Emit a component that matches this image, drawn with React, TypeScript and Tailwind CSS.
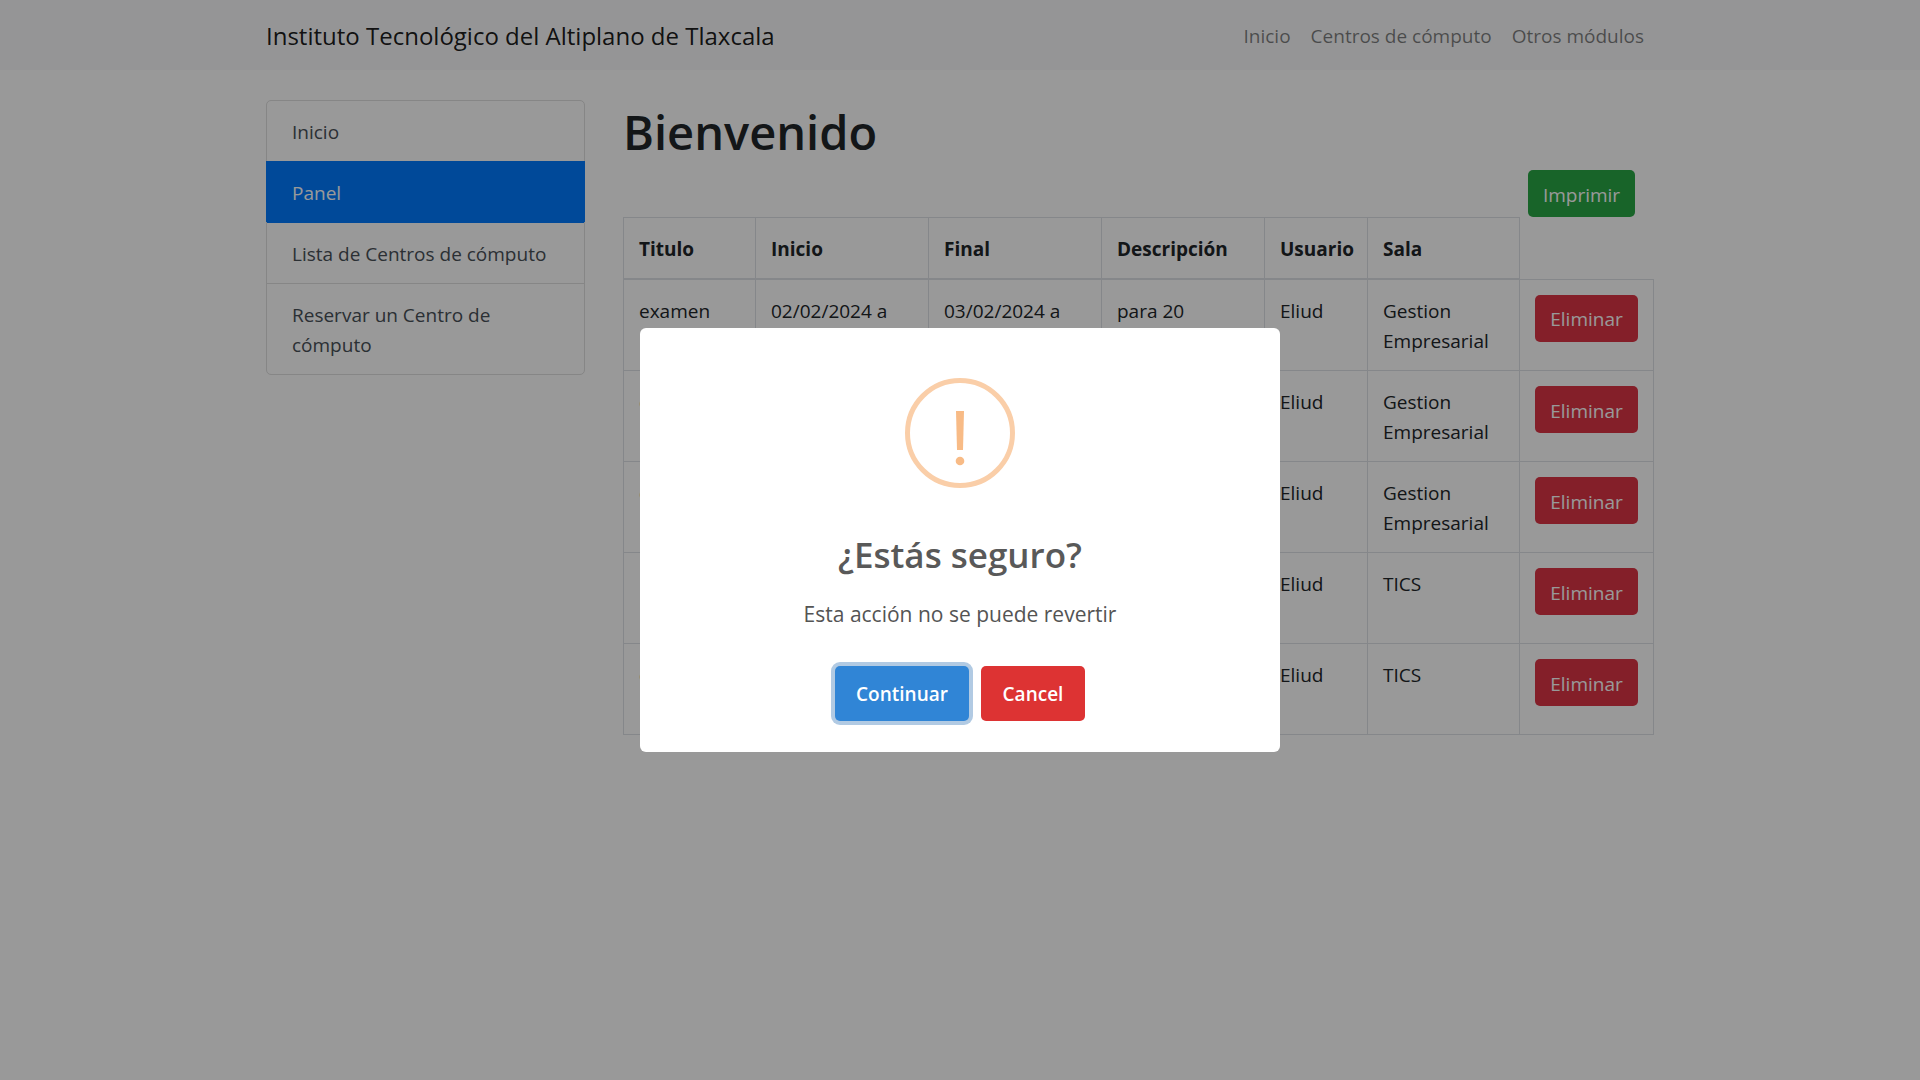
const navLinks = ['Inicio', 'Centros de cómputo', 'Otros módulos'];

const menu = [
  { label: 'Inicio', active: false },
  { label: 'Panel', active: true },
  { label: 'Lista de Centros de cómputo', active: false },
  { label: 'Reservar un Centro de cómputo', active: false },
];

const columns = [
  { label: 'Titulo', width: 'w-[132px]' },
  { label: 'Inicio', width: 'w-[173px]' },
  { label: 'Final', width: 'w-[173px]' },
  { label: 'Descripción', width: 'w-[163px]' },
  { label: 'Usuario', width: 'w-[103px]' },
  { label: 'Sala', width: 'w-[152px]' },
];

const rows = [
  ['examen', '02/02/2024 a', '03/02/2024 a', 'para 20', 'Eliud', 'Gestion Empresarial'],
  ['examen', '', '', '', 'Eliud', 'Gestion Empresarial'],
  ['examen', '', '', '', 'Eliud', 'Gestion Empresarial'],
  ['', '', '', '', 'Eliud', 'TICS'],
  ['examen', '', '', '', 'Eliud', 'TICS'],
];

function Navbar() {
  return (
    <nav className="bg-[#f8f9fa]">
      <div className="mx-auto flex h-[70px] w-full max-w-[1424px] items-center justify-between px-[18px] pt-0.5">
        <a href="#" className="text-2xl text-black/90">
          Instituto Tecnológico del Altiplano de Tlaxcala
        </a>
        <ul className="flex gap-5 pr-2.5">
          {navLinks.map((label) => (
            <li key={label}>
              <a href="#" className="text-black/50">
                {label}
              </a>
            </li>
          ))}
        </ul>
      </div>
    </nav>
  );
}

function Sidebar() {
  return (
    <aside className="w-[319px] shrink-0">
      <ul className="rounded-[5px] border border-[#dfdfdf]">
        {menu.map((item) => (
          <li key={item.label} className="border-b border-[#dfdfdf] last:border-b-0 has-[.active]:border-[#007bff]">
            <a
              href="#"
              className={
                item.active
                  ? 'active -mx-px -mt-px block bg-[#007bff] px-[26px] pt-[17px] pb-3.5 text-white'
                  : 'block px-[25px] pt-4 pb-3.5 text-[#495057]'
              }
            >
              {item.label}
            </a>
          </li>
        ))}
      </ul>
    </aside>
  );
}

function ReservationTable() {
  return (
    <table className="w-full table-fixed border-collapse text-left">
      <colgroup>
        {columns.map((c) => (
          <col key={c.label} className={c.width} />
        ))}
        <col />
      </colgroup>
      <thead>
        <tr>
          {columns.map((c) => (
            <th key={c.label} className="border border-b-2 border-[#dee2e6] px-[15px] pt-4 pb-3.5 font-bold">
              {c.label}
            </th>
          ))}
        </tr>
      </thead>
      <tbody>
        {rows.map((row, i) => (
          <tr key={i} className="h-[91px] align-top">
            {row.map((cell, j) => (
              <td key={j} className="border border-[#dee2e6] px-[15px] pt-4 pb-3.5">
                {cell}
              </td>
            ))}
            <td className="border border-[#dee2e6] px-[15px] py-[15px]">
              <button className="block h-[47px] w-[103px] rounded-[5px] bg-[#dc3545] pt-0.5 text-white">Eliminar</button>
            </td>
          </tr>
        ))}
      </tbody>
    </table>
  );
}

function ConfirmDialog() {
  return (
    <div className="fixed inset-0 flex items-center justify-center bg-black/40">
      <div
        role="dialog"
        aria-modal="true"
        aria-labelledby="dialog-title"
        className="flex w-[640px] flex-col items-center rounded-md bg-white pt-[50px] pb-[31px]"
      >
        <svg width="110" height="110" viewBox="0 0 110 110" aria-hidden="true">
          <circle cx="55" cy="55" r="52.5" fill="none" stroke="#facea8" strokeWidth="5" />
          <path d="M51 33h8l-1 39h-6z" fill="#f8bb86" />
          <circle cx="55" cy="83" r="4.3" fill="#f8bb86" />
        </svg>
        <h2 id="dialog-title" className="mt-10 text-[35px] leading-[54px] font-semibold text-[#595959]">
          ¿Estás seguro?
        </h2>
        <p className="mt-[15px] text-[21px] leading-[34px] text-[#545454]">Esta acción no se puede revertir</p>
        <div className="mt-[35px] flex gap-3">
          <button className="h-[55px] w-[134px] rounded-[5px] bg-[#3085d6] font-semibold text-white ring-4 ring-[#b1cae3]">
            Continuar
          </button>
          <button className="h-[55px] w-[104px] rounded-[5px] bg-[#dd3333] font-semibold text-white">Cancel</button>
        </div>
      </div>
    </div>
  );
}

export default function App() {
  return (
    <div className="min-h-screen bg-white font-['Open_Sans','Noto_Sans',sans-serif] text-[19px] leading-[30px] text-[#212529]">
      <Navbar />
      <div className="mx-auto flex w-full max-w-[1424px] gap-[38px] px-[18px] pt-[30px]">
        <Sidebar />
        <main className="min-w-0 flex-1">
          <h1 className="mb-2 pt-0.5 text-[47px] leading-[60px] font-semibold">Bienvenido</h1>
          <div className="flex justify-end pr-[19px]">
            <button className="h-[47px] w-[107px] rounded-[5px] bg-[#28a745] pt-0.5 text-white">Imprimir</button>
          </div>
          <ReservationTable />
        </main>
      </div>
      <ConfirmDialog />
    </div>
  );
}
